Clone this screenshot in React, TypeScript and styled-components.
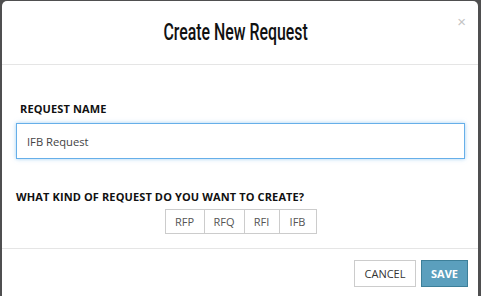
import React, { useState } from "react";
import styled, { createGlobalStyle } from "styled-components";

const Global = createGlobalStyle`
  html, body { margin: 0; padding: 0; }
  body {
    background: #4f4f50;
    font-family: "Open Sans", "Liberation Sans", sans-serif;
    overflow: hidden;
  }
`;

const Page = styled.div`
  width: 481px;
  height: 296px;
  padding: 1px 3px 0 2px;
  box-sizing: border-box;
`;

const Modal = styled.div`
  background: #fff;
  height: 295px;
  border-radius: 5px 5px 0 0;
  display: flex;
  flex-direction: column;
  position: relative;
`;

const Header = styled.div`
  height: 63px;
  border-bottom: 1px solid #e5e5e5;
  display: flex;
  align-items: center;
  justify-content: center;
  padding-right: 9px;
`;

const Title = styled.h4`
  margin: 0;
  display: inline-block;
  font-family: Roboto, "Liberation Sans", sans-serif;
  font-weight: 500;
  font-size: 23px;
  color: #111;
  transform: scaleX(0.69);
  white-space: nowrap;
`;

const Close = styled.button`
  position: absolute;
  top: 13px;
  right: 12px;
  border: 0;
  background: none;
  padding: 0;
  font-family: "Liberation Sans", sans-serif;
  font-size: 15px;
  font-weight: 400;
  line-height: 16px;
  color: #c4c4c4;
  cursor: pointer;
`;

const Body = styled.div`
  flex: 1;
  padding: 36px 13px 0 14px;
  display: flex;
  flex-direction: column;
  border-bottom: 1px solid #e5e5e5;
`;

const Label = styled.label<{ $indent?: number }>`
  display: block;
  font-size: 11px;
  line-height: 15px;
  font-weight: 700;
  letter-spacing: 0.12px;
  color: #111;
  margin-left: ${(p) => p.$indent ?? 0}px;
`;

const Input = styled.input`
  margin-top: 7px;
  height: 36px;
  box-sizing: border-box;
  width: 100%;
  border: 1px solid #66afe9;
  box-shadow: 0 0 4px rgba(102, 175, 233, 0.6);
  outline: none;
  padding: 0 10px;
  font-family: "Open Sans", "Liberation Sans", sans-serif;
  font-size: 11.2px;
  color: #444;
`;

const Section = styled.div`
  margin-top: 30px;
`;

const Group = styled.div`
  display: flex;
  justify-content: center;
  margin-top: 5px;
`;

const GroupButton = styled.button<{ $w: number }>`
  width: ${(p) => p.$w}px;
  height: 25px;
  border: 1px solid #cccccc;
  margin-left: -1px;
  background: #fff;
  padding: 0;
  font-family: "Open Sans", "Liberation Sans", sans-serif;
  font-size: 11px;
  color: #555;
  &:first-child { margin-left: 0; }
`;

const Footer = styled.div`
  height: 47px;
  display: flex;
  justify-content: flex-end;
  align-items: flex-start;
  gap: 5px;
  padding: 11px 10px 0 0;
  box-sizing: border-box;
`;

const Button = styled.button<{ $primary?: boolean }>`
  width: ${(p) => (p.$primary ? 47 : 62)}px;
  height: 27px;
  padding: 0;
  border: 1px solid ${(p) => (p.$primary ? "#3d7f99" : "#cccccc")};
  background: ${(p) => (p.$primary ? "#5b9fbd" : "#fff")};
  color: ${(p) => (p.$primary ? "#fff" : "#333")};
  font-family: "Open Sans", "Liberation Sans", sans-serif;
  font-size: 11px;
  font-weight: ${(p) => (p.$primary ? 700 : 400)};
`;

const kinds: [string, number][] = [
  ["RFP", 40],
  ["RFQ", 41],
  ["RFI", 36],
  ["IFB", 38],
];

export default function App() {
  const [name, setName] = useState("IFB Request");
  return (
    <>
      <Global />
      <Page>
        <Modal>
          <Header>
            <Title>Create New Request</Title>
          </Header>
          <Close aria-label="Close">×</Close>
          <Body>
            <Label $indent={4}>REQUEST NAME</Label>
            <Input value={name} onChange={(e) => setName(e.target.value)} />
            <Section>
              <Label>WHAT KIND OF REQUEST DO YOU WANT TO CREATE?</Label>
              <Group>
                {kinds.map(([k, w]) => (
                  <GroupButton key={k} $w={w}>
                    {k}
                  </GroupButton>
                ))}
              </Group>
            </Section>
          </Body>
          <Footer>
            <Button>CANCEL</Button>
            <Button $primary>SAVE</Button>
          </Footer>
        </Modal>
      </Page>
    </>
  );
}
